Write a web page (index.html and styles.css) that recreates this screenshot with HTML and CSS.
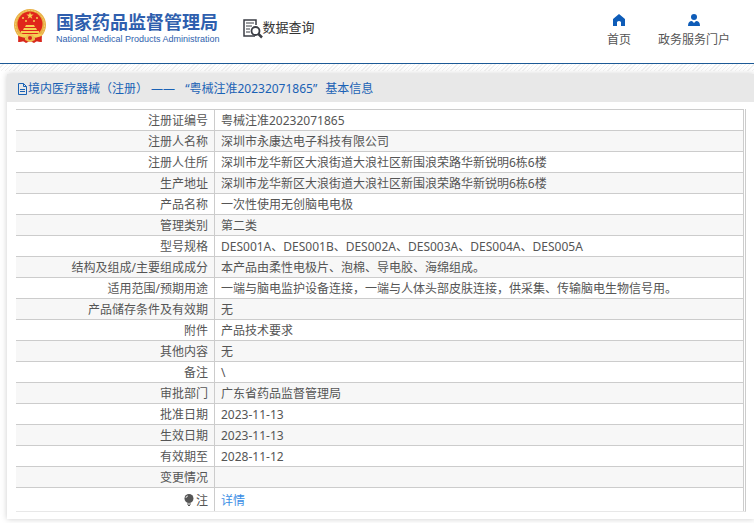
FILE: index.html
```html
<!DOCTYPE html>
<html lang="zh-CN">
<head>
    <meta charset="UTF-8">
    <title>数据查询</title>
    <link rel="stylesheet" href="styles.css">
</head>
<body>
<div class="header">
    <a class="logo" href="#">
        <svg class="emblem" viewBox="0 0 34 36" width="34" height="36">
            <path d="M6 27 L28 27 L29 34 L24 33 L21 35 L17 33 L13 35 L10 33 L5 34 Z" fill="#d8261c"/>
            <circle cx="17" cy="17" r="16" fill="#e9b044"/>
            <circle cx="17" cy="17" r="14.5" fill="none" stroke="#f3cf73" stroke-width="1" stroke-dasharray="2 1"/>
            <circle cx="17" cy="16" r="12.5" fill="#e0261b"/>
            <path d="M17 4l.9 2.6h2.7l-2.2 1.6.9 2.6L17 9.200l-2.300 1.600.9-2.600-2.200-1.600h2.700z" fill="#f6cf53"/>
            <g fill="#f6cf53">
                <circle cx="10" cy="10" r="1"/><circle cx="24" cy="10" r="1"/>
                <circle cx="13" cy="13" r="1"/><circle cx="21" cy="13" r="1"/>
                <path d="M12 19l1-2h8l1 2zM10 22l1-2h12l1 2zM8 25v-2h18v2zM5 26h24l-2 3H7z"/>
            </g>
            <circle cx="17" cy="30" r="4" fill="#edbd4e"/>
            <circle cx="17" cy="30" r="2" fill="#d8261c"/>
            <path d="M5 28l7 2v3l-6 1zM29 28l-7 2v3l6 1z" fill="#d8261c"/>
        </svg>
        <span class="name">
            <strong>国家药品监督管理局</strong>
            <small>National Medical Products Administration</small>
        </span>
    </a>
    <div class="query">
        <svg viewBox="0 0 20 20" width="20" height="20" fill="none" stroke="#3b3e45">
            <path d="M12 17H1V1h12v5" stroke-width="1.500"/>
            <path d="M3 4h8M3 7h6M3 10h4M3 13h4" stroke-width="1"/>
            <circle cx="12.500" cy="12" r="4" stroke-width="1.800" fill="#fff"/>
            <path d="M15.500 15l3.500 3.500" stroke-width="2.500"/>
        </svg>
        <span>数据查询</span>
    </div>
    <div class="nav">
        <a href="#">
            <svg viewBox="0 0 12 12" width="12" height="12" fill="#0e5cb8"><path d="M6 0L0 5v7h4V8q2-2 4 0v4h4V5z"/></svg>
            首页
        </a>
        <a href="#">
            <svg viewBox="0 0 12 12" width="12" height="12" fill="#0e5cb8"><circle cx="6" cy="3" r="3"/><path d="M0 12q0-5 4-5l2 2 2-2q4 0 4 5z"/></svg>
            政务服务门户
        </a>
    </div>
</div>
<div class="strip"></div>
<div class="panel">
    <h1 class="title"><svg viewBox="0 0 11 12" width="11" height="12" fill="none" stroke="#1a62b5"><path d="M1.500 .5h5l3 3v8h-8zM6.500 .5v3h3M3 6.500h5M3 8.500h5"/></svg>境内医疗器械（注册） ——<span class="quote">“粤械注准20232071865”</span>基本信息</h1>
    <div class="content">
        <table class="info">
            <tr><th>注册证编号</th><td>粤械注准20232071865</td></tr>
            <tr><th>注册人名称</th><td>深圳市永康达电子科技有限公司</td></tr>
            <tr><th>注册人住所</th><td>深圳市龙华新区大浪街道大浪社区新围浪荣路华新锐明6栋6楼</td></tr>
            <tr><th>生产地址</th><td>深圳市龙华新区大浪街道大浪社区新围浪荣路华新锐明6栋6楼</td></tr>
            <tr><th>产品名称</th><td>一次性使用无创脑电电极</td></tr>
            <tr><th>管理类别</th><td>第二类</td></tr>
            <tr><th>型号规格</th><td>DES001A、DES001B、DES002A、DES003A、DES004A、DES005A</td></tr>
            <tr><th>结构及组成/主要组成成分</th><td>本产品由柔性电极片、泡棉、导电胶、海绵组成。</td></tr>
            <tr><th>适用范围/预期用途</th><td>一端与脑电监护设备连接，一端与人体头部皮肤连接，供采集、传输脑电生物信号用。</td></tr>
            <tr><th>产品储存条件及有效期</th><td>无</td></tr>
            <tr><th>附件</th><td>产品技术要求</td></tr>
            <tr><th>其他内容</th><td>无</td></tr>
            <tr><th>备注</th><td>\</td></tr>
            <tr><th>审批部门</th><td>广东省药品监督管理局</td></tr>
            <tr><th>批准日期</th><td>2023-11-13</td></tr>
            <tr><th>生效日期</th><td>2023-11-13</td></tr>
            <tr><th>有效期至</th><td>2028-11-12</td></tr>
            <tr><th>变更情况</th><td></td></tr>
            <tr class="note">
                <th><svg viewBox="0 0 10 12" width="10" height="12"><circle cx="5" cy="4.500" r="4.500" fill="#555"/><path d="M3 10h4M4 11.500h2" stroke="#555"/><path d="M2 4q0-2 2-2" stroke="#ddd" fill="none"/></svg>注</th>
                <td><a href="#">详情</a></td>
            </tr>
        </table>
    </div>
</div>
</body>
</html>
```

FILE: styles.css
```css
* {
    margin: 0;
    padding: 0;
    box-sizing: border-box;
}

body {
    font: 12px/20px "Noto Sans", "Noto Sans CJK SC", sans-serif;
    color: #555;
    background: #fff;
}

a {
    color: inherit;
    text-decoration: none;
}

.header {
    display: flex;
    height: 64px;
    padding: 8px 24px 0 13px;
    border-bottom: 1px solid #1d5a96;
}

.logo {
    display: flex;
    gap: 9px;
    color: #2f5fae;
}

.name {
    display: flex;
    flex-direction: column;
    padding-top: 4px;
    white-space: nowrap;
}

.name strong {
    font-size: 18px;
    line-height: 20px;
}

.name small {
    font: 9px/14px "Liberation Sans", sans-serif;
}

.query {
    display: flex;
    padding: 11px 0 0 23px;
    font-size: 13px;
    line-height: 16px;
    color: #333;
}

/* 右侧导航 */
.nav {
    display: flex;
    gap: 27px;
    margin-left: auto;
}

.nav a {
    display: flex;
    flex-direction: column;
    align-items: center;
    padding-top: 6px;
    line-height: 28px;
}

.strip {
    height: 7px;
    background: repeating-linear-gradient(135deg, #fff 0, #fff 2px, #f1f1f1 2px, #f1f1f1 3px);
}

.panel {
    margin: 3px 0 4px 7px;
    box-shadow: 0 0 6px #ccc;
    background: #fff;
}

.title {
    height: 28px;
    padding-left: 10px;
    font-size: 12px;
    line-height: 30px;
    font-weight: normal;
    white-space: nowrap;
    color: #1a62b5;
    background: #e8e8e8;
}

.title svg {
    vertical-align: -2px;
}

.quote {
    margin: 0 8px 0 10px;
}

.content {
    padding: 7px 8px 7px 9px;
}

/* 详情表格 */
.info {
    width: 100%;
    padding-right: 1px;
    border-right: 1px solid #ccc;
    border-bottom: 1px solid #e8e8e8;
    border-spacing: 0;
}

.info tr:nth-child(even) {
    background: #f7f7f7;
}

.info th,
.info td {
    height: 21px;
    padding: 2px 6px 0;
    border-top: 1px solid #ccc;
    border-right: 1px solid #ccc;
    line-height: 18px;
}

.info th {
    width: 199px;
    font-weight: normal;
    text-align: right;
}

.info .note th,
.info .note td {
    height: 24px;
}

.info th svg {
    margin-right: 2px;
    vertical-align: -1px;
}

.info a {
    color: #3b8ee5;
}
```
